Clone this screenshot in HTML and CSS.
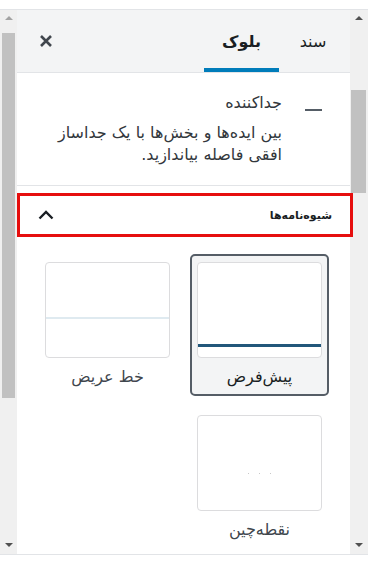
FILE: index.html
```html
<!DOCTYPE html>
<html lang="fa">
<head>
    <meta charset="UTF-8">
    <meta name="viewport" content="width=device-width, initial-scale=1.0">
    <title>تنظیمات بلوک</title>
    <link rel="stylesheet" href="styles.css">
</head>
<body>
    <div class="frame">
        <div class="scrollbar scrollbar-left">
            <span class="arrow arrow-up dim"></span>
            <div class="track"><div class="thumb"></div></div>
            <span class="arrow arrow-down"></span>
        </div>

        <div class="sidebar" dir="rtl">
            <div class="sidebar-header">
                <ul class="tabs">
                    <li class="tab">سند</li>
                    <li class="tab active">بلوک</li>
                </ul>
                <button class="close" aria-label="بستن">
                    <svg width="14" height="14" viewBox="0 0 14 14">
                        <path d="M2 2 L12 12 M12 2 L2 12" stroke="#40464d" stroke-width="2.6" fill="none"/>
                    </svg>
                </button>
            </div>

            <div class="block-card">
                <span class="block-icon">
                    <svg width="24" height="24" viewBox="0 0 24 24">
                        <rect x="3" y="11" width="17" height="2" fill="#555d66"/>
                    </svg>
                </span>
                <div class="block-info">
                    <div class="block-title">جداکننده</div>
                    <div class="block-desc">بین ایده‌ها و بخش‌ها با یک جداساز افقی فاصله بیاندازید.</div>
                </div>
            </div>

            <div class="panel">
                <button class="panel-toggle">
                    <span>شیوه‌نامه‌ها</span>
                    <svg width="18" height="12" viewBox="0 0 18 12">
                        <path d="M2.5 9.5 L9 3 L15.5 9.5" stroke="#191e23" stroke-width="2.4" fill="none"/>
                    </svg>
                </button>

                <div class="styles-grid">
                    <div class="style-item active">
                        <div class="preview"><div class="line line-default"></div></div>
                        <div class="style-label">پیش‌فرض</div>
                    </div>
                    <div class="style-item">
                        <div class="preview"><div class="line line-wide"></div></div>
                        <div class="style-label">خط عریض</div>
                    </div>
                    <div class="style-item">
                        <div class="preview"><div class="dots"><i></i><i></i><i></i></div></div>
                        <div class="style-label">نقطه‌چین</div>
                    </div>
                </div>
            </div>
        </div>

        <div class="scrollbar scrollbar-right">
            <span class="arrow arrow-up"></span>
            <div class="track"><div class="thumb"></div></div>
            <span class="arrow arrow-down"></span>
        </div>
    </div>
</body>
</html>
```

FILE: styles.css
```css
body {
    margin: 0;
    padding-top: 9px;
    background: #fff;
    font-family: "DejaVu Sans", "Noto Sans", sans-serif;
    font-size: 16px;
    color: #191e23;
    overflow: hidden;
}
.frame {
    display: flex;
    width: 368px;
    height: 544px;
    border-top: 1px solid #e2e4e7;
    border-bottom: 1px solid #e2e4e7;
}
.scrollbar {
    flex-shrink: 0;
    background: #f0f0f0;
    display: flex;
    flex-direction: column;
    align-items: center;
}
.scrollbar-left {
    width: 17px;
}
.scrollbar-right {
    width: 18px;
}
.track {
    flex: 1;
    width: 100%;
}
.thumb {
    background: #c1c1c1;
}
.scrollbar-left .thumb {
    margin: 7px 2px 0 2px;
    height: 365px;
}
.scrollbar-right .thumb {
    margin: 64px 2px 0 1px;
    height: 103px;
}
.arrow {
    width: 0;
    height: 0;
    border-left: 4px solid transparent;
    border-right: 4px solid transparent;
    margin: 6px 0;
}
.arrow-up {
    border-bottom: 4px solid #505050;
}
.arrow-up.dim {
    border-bottom-color: #a3a3a3;
}
.arrow-down {
    border-top: 4px solid #505050;
    margin-bottom: 7px;
}
.sidebar {
    flex-shrink: 0;
    width: 333px;
    min-width: 0;
    background: #fff;
}
.sidebar-header {
    display: flex;
    align-items: center;
    justify-content: space-between;
    height: 62px;
    background: #f3f4f5;
    border-bottom: 1px solid #e2e4e7;
}
.tabs {
    display: flex;
    list-style: none;
    margin: 0;
    padding: 0 3px 0 0;
    height: 100%;
}
.tab {
    display: flex;
    align-items: center;
    justify-content: center;
    width: 68px;
    color: #191e23;
}
.tab.active {
    width: 75px;
    font-weight: bold;
    box-shadow: inset 0 -4px 0 #007cba;
}
.close {
    border: none;
    background: none;
    padding: 0;
    margin-left: 22px;
    display: flex;
}
.block-card {
    display: flex;
    align-items: flex-start;
    padding: 19px 24px 19px 16px;
    border-bottom: 1px solid #e2e4e7;
}
.block-icon {
    margin-left: 20px;
    margin-top: 6px;
    display: flex;
}
.block-title {
    line-height: 22px;
    color: #32373c;
    margin-bottom: 8px;
}
.block-desc {
    line-height: 22px;
    color: #32373c;
}
.panel {
    padding-top: 7px;
}
.panel-toggle {
    position: relative;
    z-index: 1;
    display: flex;
    align-items: center;
    justify-content: space-between;
    box-sizing: border-box;
    width: 336px;
    height: 44px;
    margin: 0 -3px 0 0;
    padding: 0 18px 0 17px;
    border: 3px solid #e60e0e;
    background: #fff;
    font-family: inherit;
    font-size: 11px;
    font-weight: bold;
    color: #191e23;
}
.styles-grid {
    display: grid;
    grid-template-columns: 139px 139px;
    column-gap: 13px;
    row-gap: 11px;
    padding: 17px 21px 0 21px;
}
.style-item {
    border: 2px solid transparent;
    border-radius: 5px;
    padding: 6px 5px 7px 5px;
}
.style-item.active {
    border-color: #555d66;
    background: #f3f4f5;
}
.preview {
    position: relative;
    height: 94px;
    background: #fff;
    border: 1px solid #dcdcde;
    border-radius: 4px;
    overflow: hidden;
}
.line {
    position: absolute;
    left: 0;
    right: 0;
}
.line-default {
    top: 81px;
    height: 3px;
    background: #22577a;
}
.line-wide {
    top: 54px;
    height: 2px;
    background: #dfeaf0;
}
.dots {
    position: absolute;
    top: 57px;
    left: 0;
    right: 0;
    display: flex;
    justify-content: center;
    gap: 10px;
}
.dots i {
    width: 1px;
    height: 1px;
    background: #c8c8c8;
}
.style-label {
    text-align: center;
    line-height: 20px;
    margin-top: 9px;
    color: #40464d;
}
.style-item.active .style-label {
    color: #191e23;
}
```
